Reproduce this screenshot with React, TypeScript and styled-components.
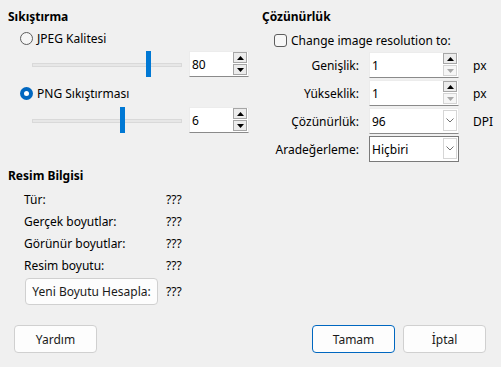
import React from 'react';
import styled, {createGlobalStyle} from 'styled-components';

const GlobalStyle = createGlobalStyle`
  html, body {
    margin: 0;
    padding: 0;
    background: #f0f0f0;
  }
  body {
    font-family: "Noto Sans", "Open Sans", sans-serif;
    font-size: 12px;
    color: #000;
  }
`

const Dialog = styled.div`
  width: 501px;
  height: 367px;
  display: flex;
  flex-direction: column;
  box-sizing: border-box;
  padding-top: 7px;
`
const Top = styled.div`
  display: flex;
  padding-left: 8px;
`
const LeftCol = styled.div`
  width: 254px;
  display: flex;
  flex-direction: column;
`
const RightCol = styled.div`
  flex: 1;
  display: flex;
  flex-direction: column;
`
const Heading = styled.div`
  height: 20px;
  line-height: 20px;
  font-weight: 700;
`
const OptionRow = styled.label<{ $mt?: number }>`
  display: flex;
  align-items: center;
  gap: 4px;
  height: 22px;
  padding-left: 12px;
  margin-top: ${p => p.$mt ?? 0}px;
`
const Radio = styled.span<{ $checked?: boolean }>`
  flex: none;
  width: 13px;
  height: 13px;
  box-sizing: border-box;
  border-radius: 50%;
  position: relative;
  border: ${p => p.$checked ? 'none' : '1px solid #5d5d5d'};
  background: ${p => p.$checked ? '#0067c0' : '#f5f5f5'};
  &::after {
    content: "";
    display: ${p => p.$checked ? 'block' : 'none'};
    position: absolute;
    left: 4px;
    top: 4px;
    width: 5px;
    height: 5px;
    border-radius: 50%;
    background: #fff;
  }
`
const Checkbox = styled.span`
  flex: none;
  width: 13px;
  height: 13px;
  box-sizing: border-box;
  border: 1px solid #5d5d5d;
  border-radius: 3px;
  background: #f7f7f7;
`
const SliderRow = styled.div<{ $mt: number }>`
  display: flex;
  align-items: center;
  height: 26px;
  margin-top: ${p => p.$mt}px;
  padding-left: 24px;
  gap: 7px;
`
const Slider = styled.div`
  position: relative;
  width: 150px;
  height: 26px;
`
const Track = styled.div`
  position: absolute;
  left: 0;
  right: 0;
  top: 12px;
  height: 4px;
  box-sizing: border-box;
  border: 1px solid #d9d9d9;
  background: #e7e7e7;
`
const Thumb = styled.div`
  position: absolute;
  top: 0;
  width: 5px;
  height: 26px;
  background: #0078d4;
`
const Field = styled.div<{ $w: number; $boxed?: boolean }>`
  position: relative;
  width: ${p => p.$w}px;
  height: 26px;
  box-sizing: border-box;
  background: #fff;
  border: 1px solid ${p => p.$boxed ? '#7a7a7a' : '#ececec'};
  border-bottom-color: ${p => p.$boxed ? '#7a7a7a' : '#8a8a8a'};
  display: flex;
  align-items: center;
  padding-left: 2px;
`
const SpinCol = styled.div`
  position: absolute;
  right: 1px;
  top: 0;
  display: flex;
  flex-direction: column;
  gap: 1px;
`
const SpinBtn = styled.div<{ $disabled?: boolean }>`
  width: 14px;
  height: 11px;
  box-sizing: border-box;
  border: 1px solid ${p => p.$disabled ? '#d4d4d4' : '#a6a6a6'};
  background: ${p => p.$disabled ? '#f6f6f6' : '#ececec'};
  display: flex;
  align-items: center;
  justify-content: center;
`
const DropBtn = styled.div`
  position: absolute;
  right: 1px;
  top: 1px;
  width: 14px;
  height: 21px;
  box-sizing: border-box;
  border: 1px solid #d6d6d6;
  background: #fff;
  display: flex;
  align-items: center;
  justify-content: center;
`
const FormGrid = styled.div`
  display: grid;
  grid-template-columns: 97px 90px auto;
  column-gap: 10px;
  row-gap: 2px;
  margin-top: 1px;
  align-items: center;
`
const FieldLabel = styled.span`
  text-align: right;
`
const Unit = styled.span`
  margin-left: 4px;
`
const InfoSection = styled.div`
  padding-left: 8px;
  margin-top: 4px;
  display: flex;
  flex-direction: column;
`
const InfoGrid = styled.div`
  display: grid;
  grid-template-columns: 142px auto;
  grid-template-rows: repeat(4, 22px) 29px;
  align-items: center;
  padding-left: 16px;
  margin-top: 2px;
`
const Button = styled.button<{ $primary?: boolean }>`
  font-family: inherit;
  font-size: 12px;
  color: #1a1a1a;
  height: 28px;
  width: 83px;
  box-sizing: border-box;
  background: #fdfdfd;
  border: 1px solid ${p => p.$primary ? '#0067c0' : '#d0d0d0'};
  border-radius: 4px;
  padding: 0;
`
const CalcButton = styled(Button)`
  width: 133px;
  height: 27px;
  margin-left: 1px;
  align-self: end;
`
const CalcValue = styled.span`
  align-self: end;
  line-height: 27px;
`
const Bottom = styled.div`
  margin-top: auto;
  display: flex;
  gap: 8px;
  padding: 0 15px 14px 14px;
`
const Spacer = styled.div`
  flex: 1;
`

const Up = ({color = '#000'}: { color?: string }) => (
  <svg width="7" height="4" viewBox="0 0 7 4"><path d="M0 4 L3.5 0 L7 4 Z" fill={color}/></svg>
)
const Down = ({color = '#000'}: { color?: string }) => (
  <svg width="7" height="4" viewBox="0 0 7 4"><path d="M0 0 L3.5 4 L7 0 Z" fill={color}/></svg>
)
const Chevron = () => (
  <svg width="8" height="5" viewBox="0 0 8 5"><path d="M0.5 0.5 L4 4 L7.5 0.5" fill="none" stroke="#707070" strokeWidth="1"/></svg>
)

const Spin = ({value, w, downDisabled}: { value: string; w: number; downDisabled?: boolean }) => (
  <Field $w={w}>
    {value}
    <SpinCol>
      <SpinBtn><Up/></SpinBtn>
      <SpinBtn $disabled={downDisabled}><Down color={downDisabled ? '#a8a8a8' : '#000'}/></SpinBtn>
    </SpinCol>
  </Field>
)

const Combo = ({value, boxed}: { value: string; boxed?: boolean }) => (
  <Field $w={90} $boxed={boxed}>
    {value}
    <DropBtn><Chevron/></DropBtn>
  </Field>
)

const info = ['Tür:', 'Gerçek boyutlar:', 'Görünür boyutlar:', 'Resim boyutu:'];

export default function App() {
  return (
    <Dialog>
      <GlobalStyle/>
      <Top>
        <LeftCol>
          <Heading>Sıkıştırma</Heading>
          <OptionRow><Radio/>JPEG Kalitesi</OptionRow>
          <SliderRow $mt={2}>
            <Slider><Track/><Thumb style={{left: 114}}/></Slider>
            <Spin value="80" w={60}/>
          </SliderRow>
          <OptionRow $mt={5}><Radio $checked/>PNG Sıkıştırması</OptionRow>
          <SliderRow $mt={3}>
            <Slider><Track/><Thumb style={{left: 88}}/></Slider>
            <Spin value="6" w={60}/>
          </SliderRow>
        </LeftCol>
        <RightCol>
          <Heading>Çözünürlük</Heading>
          <OptionRow $mt={2}><Checkbox/>Change image resolution to:</OptionRow>
          <FormGrid>
            <FieldLabel>Genişlik:</FieldLabel>
            <Spin value="1" w={90} downDisabled/>
            <Unit>px</Unit>
            <FieldLabel>Yükseklik:</FieldLabel>
            <Spin value="1" w={90} downDisabled/>
            <Unit>px</Unit>
            <FieldLabel>Çözünürlük:</FieldLabel>
            <Combo value="96"/>
            <Unit>DPI</Unit>
            <FieldLabel>Aradeğerleme:</FieldLabel>
            <Combo value="Hiçbiri" boxed/>
            <span/>
          </FormGrid>
        </RightCol>
      </Top>
      <InfoSection>
        <Heading>Resim Bilgisi</Heading>
        <InfoGrid>
          {info.map(l => (
            <React.Fragment key={l}>
              <span>{l}</span>
              <span>???</span>
            </React.Fragment>
          ))}
          <CalcButton>Yeni Boyutu Hesapla:</CalcButton>
          <CalcValue>???</CalcValue>
        </InfoGrid>
      </InfoSection>
      <Bottom>
        <Button>Yardım</Button>
        <Spacer/>
        <Button $primary>Tamam</Button>
        <Button>İptal</Button>
      </Bottom>
    </Dialog>
  );
}
